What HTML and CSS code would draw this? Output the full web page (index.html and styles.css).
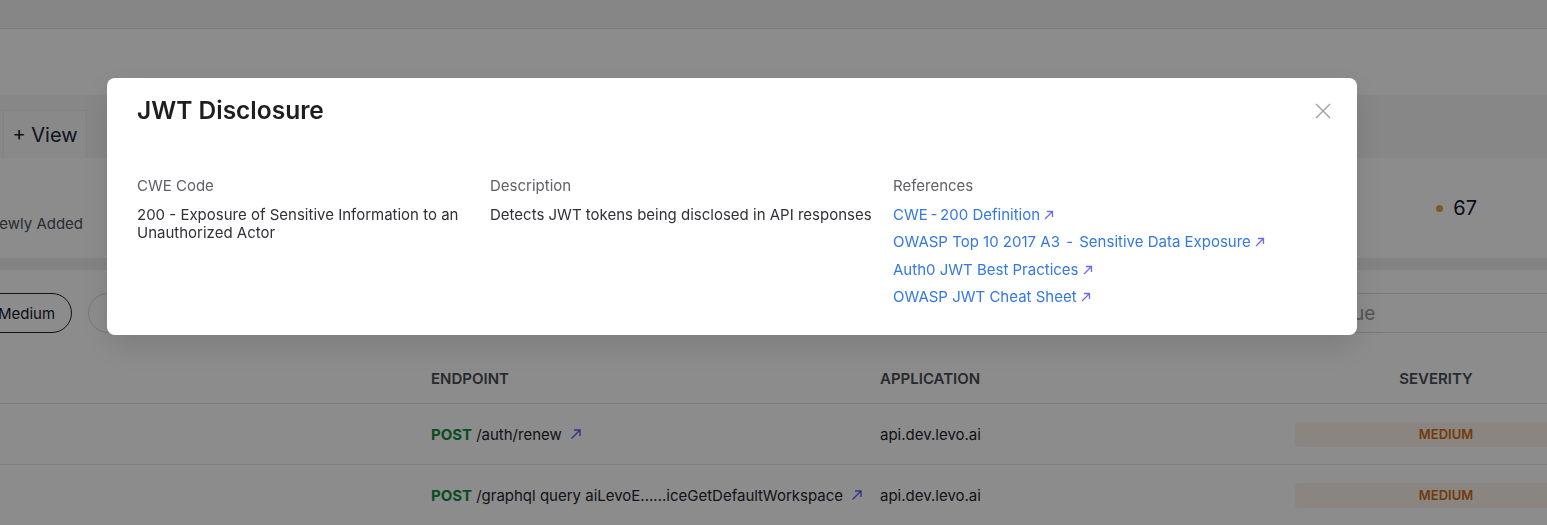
FILE: index.html
```html
<!DOCTYPE html>
<html lang="en">
<head>
<meta charset="utf-8">
<title>JWT Disclosure</title>
<link rel="stylesheet" href="styles.css">
</head>
<body>
<div class="page">
  <div class="topbar"></div>
  <div class="subhead"></div>
  <div class="tabs">
    <div class="view-btn">+ View</div>
  </div>
  <div class="summary">
    <div class="summary-label">Newly Added</div>
    <div class="summary-count"><span class="dot"></span><span class="count">67</span></div>
  </div>
  <div class="band"></div>
  <div class="filters">
    <div class="pill pill-active">Medium</div>
    <div class="pill pill-ghost">Low</div>
    <div class="spacer"></div>
    <div class="search">Search issue</div>
  </div>
  <div class="table">
    <div class="row head">
      <div class="cell c-issue"></div>
      <div class="cell c-endpoint">ENDPOINT</div>
      <div class="cell c-app">APPLICATION</div>
      <div class="cell c-sev">SEVERITY</div>
    </div>
    <div class="row">
      <div class="cell c-issue"></div>
      <div class="cell c-endpoint"><span class="method">POST</span><span class="path">/auth/renew</span>
        <svg class="ext" viewBox="0 0 16 16" width="16" height="16"><path d="M3.5 12.5 L12 4 M6 4 H12 V10" fill="none" stroke="currentColor" stroke-width="1.4"/></svg></div>
      <div class="cell c-app">api.dev.levo.ai</div>
      <div class="cell c-sev"><span class="badge">MEDIUM</span></div>
    </div>
    <div class="row">
      <div class="cell c-issue"></div>
      <div class="cell c-endpoint"><span class="method">POST</span><span class="path">/graphql query aiLevoE......iceGetDefaultWorkspace</span>
        <svg class="ext" viewBox="0 0 16 16" width="16" height="16"><path d="M3.5 12.5 L12 4 M6 4 H12 V10" fill="none" stroke="currentColor" stroke-width="1.4"/></svg></div>
      <div class="cell c-app">api.dev.levo.ai</div>
      <div class="cell c-sev"><span class="badge">MEDIUM</span></div>
    </div>
  </div>
</div>

<div class="overlay">
  <div class="modal">
    <h1 class="title">JWT Disclosure</h1>
    <button class="close" aria-label="Close">
      <svg viewBox="0 0 16 16" width="16" height="16"><path d="M1 1 L15 15 M15 1 L1 15" fill="none" stroke="currentColor" stroke-width="1.4"/></svg>
    </button>
    <div class="details">
      <div class="col col-cwe">
        <div class="label">CWE Code</div>
        <div class="value">200 - Exposure of Sensitive Information to an Unauthorized Actor</div>
      </div>
      <div class="col col-desc">
        <div class="label">Description</div>
        <div class="value">Detects JWT tokens being disclosed in API responses</div>
      </div>
      <div class="col col-refs">
        <div class="label">References</div>
        <div class="links">
          <a class="link" href="#">CWE&#8201;-&#8201;200 Definition<svg class="arr" viewBox="0 0 12 12" width="12" height="12"><path d="M2 10 L9.5 2.5 M4 2.5 H9.5 V8" fill="none" stroke="currentColor" stroke-width="1.3"/></svg></a>
          <a class="link" href="#">OWASP Top 10 2017 A3 <span class="gap">-</span> Sensitive Data Exposure<svg class="arr" viewBox="0 0 12 12" width="12" height="12"><path d="M2 10 L9.5 2.5 M4 2.5 H9.5 V8" fill="none" stroke="currentColor" stroke-width="1.3"/></svg></a>
          <a class="link" href="#">Auth0 JWT Best Practices<svg class="arr" viewBox="0 0 12 12" width="12" height="12"><path d="M2 10 L9.5 2.5 M4 2.5 H9.5 V8" fill="none" stroke="currentColor" stroke-width="1.3"/></svg></a>
          <a class="link" href="#">OWASP JWT Cheat Sheet<svg class="arr" viewBox="0 0 12 12" width="12" height="12"><path d="M2 10 L9.5 2.5 M4 2.5 H9.5 V8" fill="none" stroke="currentColor" stroke-width="1.3"/></svg></a>
        </div>
      </div>
    </div>
  </div>
</div>
</body>
</html>
```

FILE: styles.css
```css
* { box-sizing: border-box; }

html, body {
  margin: 0;
  padding: 0;
  width: 1547px;
  height: 525px;
  overflow: hidden;
  background: #ffffff;
  font-family: Inter, "Noto Sans", "Liberation Sans", sans-serif;
}

.page {
  width: 1547px;
  display: flex;
  flex-direction: column;
}

.topbar {
  height: 29px;
  background: #f4f4f5;
  border-bottom: 1px solid #e2e2e4;
}

.subhead {
  height: 66px;
  background: #ffffff;
}

.tabs {
  height: 63px;
  background: #f6f6f7;
  display: flex;
  align-items: flex-end;
  padding-left: 3px;
}

.view-btn {
  width: 84px;
  height: 48px;
  background: #f9f9fa;
  border: 1px solid #ededee;
  border-bottom: none;
  display: flex;
  align-items: center;
  justify-content: center;
  font-size: 20px;
  color: #1c2435;
}

.summary {
  height: 100px;
  background: #ffffff;
  display: flex;
  align-items: flex-start;
}

.summary-label {
  margin-left: -12px;
  margin-top: 57px;
  font-size: 15px;
  line-height: 18px;
  color: #4b5160;
}

.summary-count {
  margin-left: auto;
  margin-right: 70px;
  margin-top: 36px;
  display: flex;
  align-items: center;
  gap: 10px;
}

.dot {
  width: 7px;
  height: 7px;
  border-radius: 50%;
  background: #e0a53a;
}

.count {
  font-size: 20px;
  line-height: 28px;
  color: #111827;
}

.band {
  height: 12px;
  background: #efeff0;
}

.filters {
  height: 80px;
  display: flex;
  align-items: flex-start;
  padding-top: 23px;
}

.pill {
  height: 40px;
  border-radius: 20px;
  display: flex;
  align-items: center;
  font-size: 15px;
  color: #111827;
  flex-shrink: 0;
}

.pill-active {
  margin-left: -40px;
  width: 112px;
  padding-left: 37px;
  border: 1px solid #222;
}

.pill-ghost {
  margin-left: 16px;
  width: 80px;
  padding-left: 18px;
  border: 1px solid #d8d8d8;
  color: #777;
}

.spacer { flex: 1; }

.search {
  width: 300px;
  height: 40px;
  margin-right: -8px;
  flex-shrink: 0;
  border: 1px solid #dcdcde;
  border-radius: 6px;
  display: flex;
  align-items: center;
  padding-left: 4px;
  font-size: 19px;
  color: #9b9ba0;
}

.table {
  display: flex;
  flex-direction: column;
  overflow: hidden;
}

.row {
  display: flex;
  height: 61px;
  border-bottom: 1px solid #e6e6e8;
  align-items: center;
}

.row.head {
  height: 54px;
  padding-top: 3px;
  font-weight: 600;
}

.cell {
  font-size: 15px;
  color: #1f2430;
  display: flex;
  align-items: center;
  flex-shrink: 0;
}

.head .cell { color: #4a4d55; font-weight: 600; }

.c-issue { width: 431px; }
.c-endpoint { width: 449px; }
.c-app { width: 415px; }
.c-sev { width: 302px; justify-content: center; }
.head .c-sev { padding-right: 20px; }

.method {
  color: #118a3e;
  font-weight: 700;
  margin-right: 4px;
}

.path { color: #1f2430; }

.ext {
  margin-left: 6px;
  color: #5b5ef0;
}

.badge {
  width: 302px;
  height: 25px;
  border-radius: 4px;
  background: #fbf3ea;
  display: flex;
  align-items: center;
  justify-content: center;
  font-size: 13px;
  font-weight: 600;
  color: #cf6a14;
}

.overlay {
  position: fixed;
  inset: 0;
  background: rgba(0, 0, 0, 0.45);
  display: flex;
  align-items: flex-start;
  padding-left: 107px;
  padding-top: 78px;
}

.modal {
  position: relative;
  width: 1250px;
  background: #ffffff;
  border-radius: 8px;
  padding: 16px 30px 29px 30px;
  box-shadow: 0 12px 32px rgba(0, 0, 0, 0.12);
}

.title {
  margin: 0;
  font-size: 24.5px;
  line-height: 32px;
  font-weight: 600;
  color: #1e1e1e;
}

.close {
  position: absolute;
  top: 25px;
  right: 26px;
  width: 16px;
  height: 16px;
  padding: 0;
  border: none;
  background: none;
  color: #9aa1ad;
  display: flex;
}

.details {
  margin-top: 50px;
  display: flex;
  gap: 20px;
}

.col-cwe { width: 333px; }
.col-desc { width: 383px; }
.col-refs { flex: 1; }

.label {
  font-size: 15px;
  line-height: 20px;
  color: #5f6166;
  margin-bottom: 10px;
}

.value {
  font-size: 15px;
  line-height: 18px;
  color: #2f3136;
}

.links {
  display: flex;
  flex-direction: column;
  align-items: flex-start;
  gap: 9.3px;
}

.link {
  font-size: 15px;
  line-height: 18px;
  color: #3478e3;
  text-decoration: none;
  display: inline-flex;
  align-items: center;
  white-space: pre;
}

.gap {
  padding: 0 2px;
}

.arr {
  margin-left: 3px;
  color: #6a6cf2;
}
```
